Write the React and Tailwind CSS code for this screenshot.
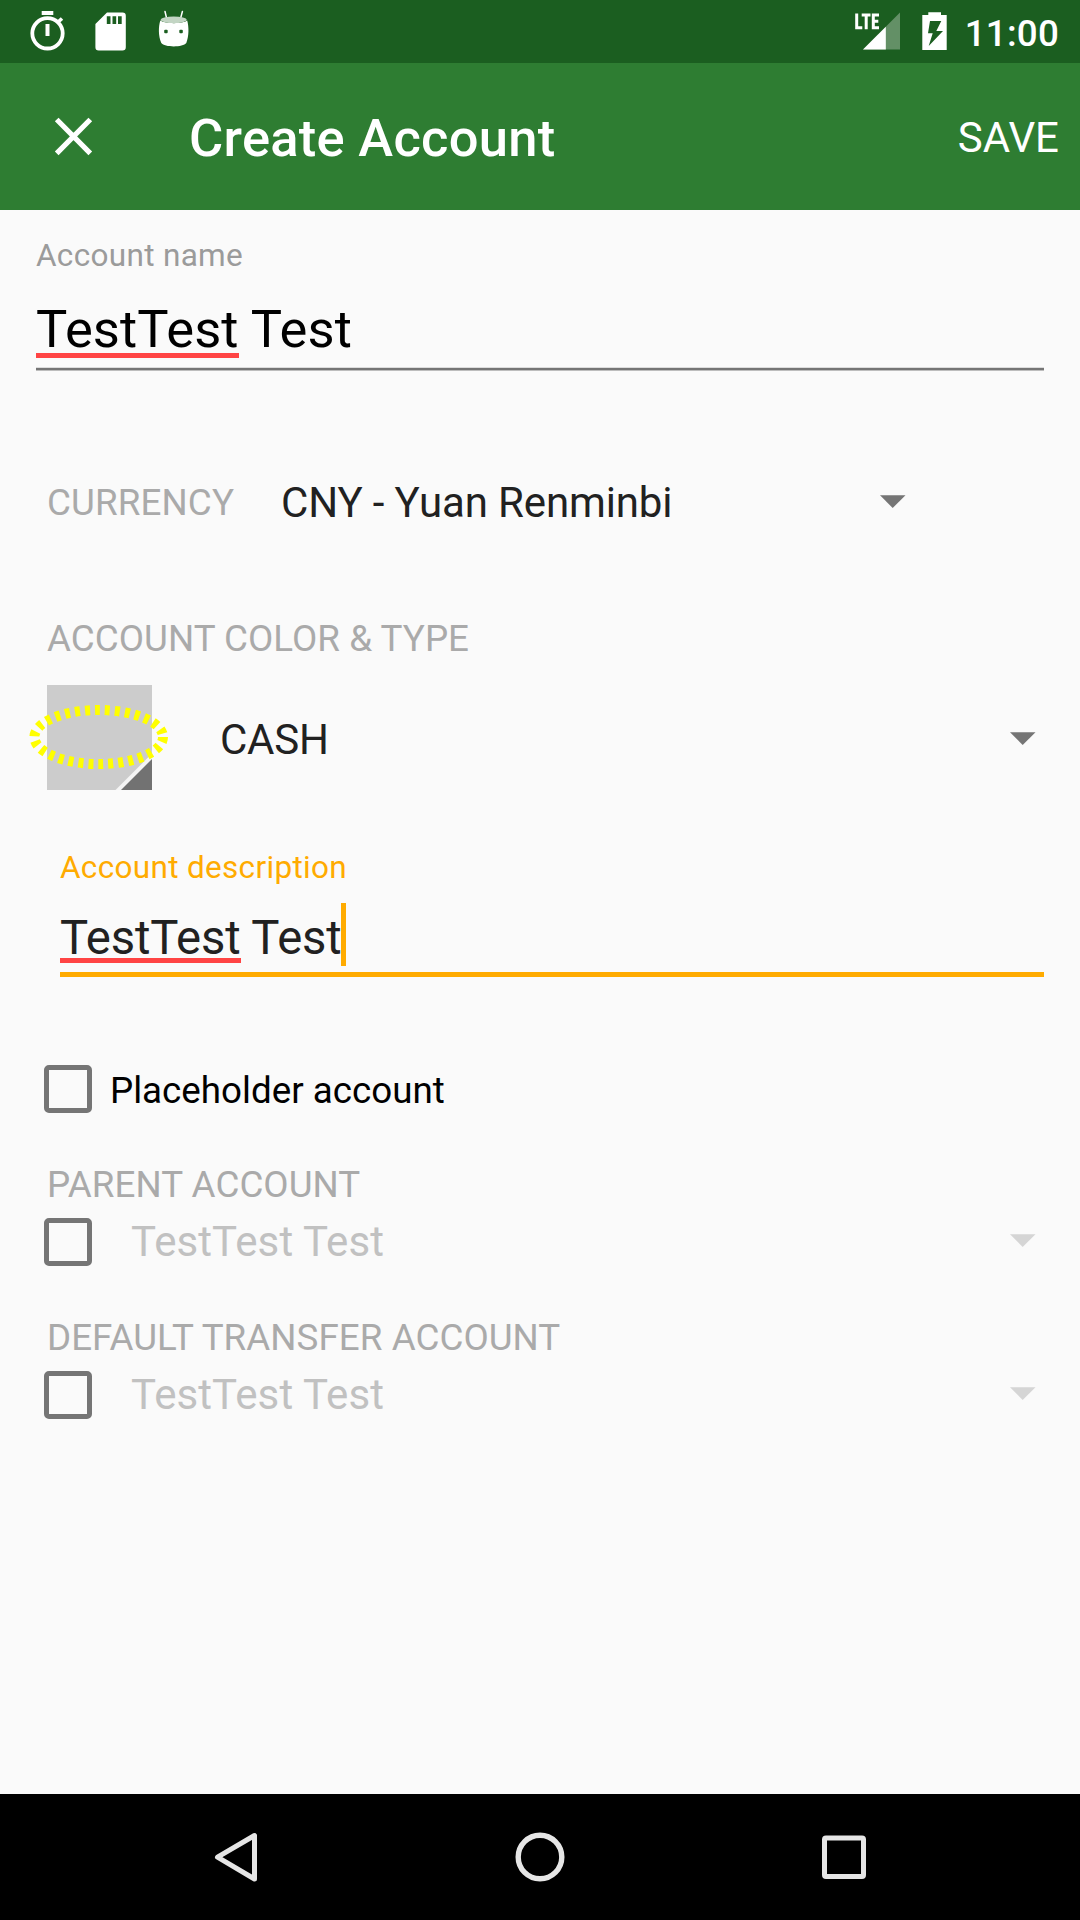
import React from "react";

function StatusBar() {
  return (
    <div className="flex h-[63px] items-start justify-between bg-[#1b5e20]">
      <div className="flex">
        <svg className="h-[63px] w-[72px]" viewBox="0 0 72 63" fill="none">
          <rect x="41.7" y="11" width="11.6" height="4" fill="#fff" />
          <circle cx="47.5" cy="33.3" r="15.2" stroke="#fff" strokeWidth="3.8" />
          <rect x="45.5" y="24" width="4" height="12" fill="#fff" />
          <path d="M57.5 22.5L62 18.5" stroke="#fff" strokeWidth="3.6" />
        </svg>
        <svg className="h-[63px] w-[72px]" viewBox="72 0 72 63">
          <path fill="#fff" fillRule="evenodd" d="M107 12.5H122.5a3.3 3.3 0 0 1 3.3 3.3V47.2a3.3 3.3 0 0 1-3.3 3.3H98.7a3.3 3.3 0 0 1-3.3-3.3V24zM106.8 16.3v7.7h3.7v-7.7zM112.5 16.3v7.7h3.7v-7.7zM118 16.3v7.7h3.7v-7.7z" />
        </svg>
        <svg className="h-[63px] w-[60px]" viewBox="144 0 60 63">
          <path d="M165 11.5L166.8 19M182.4 11.5L180.4 19" stroke="#fff" strokeWidth="1.5" strokeLinecap="round" />
          <path d="M160.3 20.5C165 24 183 24 187.2 20.5C189 27 189 36 186.3 43C183 47.5 164.5 47.5 161.3 43C158.3 36 158.3 27 160.3 20.5z" fill="#fff" />
          <ellipse cx="173.7" cy="19.8" rx="13" ry="3.3" fill="#c3d5c4" />
          <rect x="164.2" y="29.8" width="3.5" height="3.5" rx="1" fill="#1b5e20" />
          <rect x="179.3" y="29.8" width="3.5" height="3.5" rx="1" fill="#1b5e20" />
        </svg>
      </div>
      <div className="flex pr-[21px]">
        <svg className="h-[63px] w-[64px]" viewBox="846 0 64 63">
          <path d="M900 12.5V49.5H863z" fill="#639066" />
          <path d="M885.8 26.7V49.5H863z" fill="#fff" />
          <path d="M856.7 13.5V27.7H862.3M861.7 15H870.5M866.2 15V29.2M879 15H873.3V27.7H879M873.3 21.3H878.3" fill="none" stroke="#fff" strokeWidth="3" />
        </svg>
        <svg className="h-[63px] w-[55px]" viewBox="910 0 55 63">
          <path fill="#fff" fillRule="evenodd" d="M928.3 12.3H941V15H946.7V50H922.3V15H928.3zM930 21L928 33.3H932.7L928.7 46L943 31H936.3L941.3 21z" />
        </svg>
        <span className="h-[63px] text-[36.75px] leading-[67px] font-medium tracking-[0.2px]">11:00</span>
      </div>
    </div>
  );
}

function AppBar() {
  return (
    <header className="flex h-[147px] items-center bg-[#2e7d32] pr-[21px]">
      <svg className="h-[147px] w-[189px]" viewBox="0 63 189 147">
        <path d="M56.7 119.5L90.3 153.3M90.3 119.5L56.7 153.3" stroke="#fff" strokeWidth="5.2" />
      </svg>
      <h1 className="grow pt-[3px] text-[52.5px] leading-[62px] font-medium tracking-[0.27px]">Create Account</h1>
      <span className="pt-[3px] text-[42px] leading-[50px]">SAVE</span>
    </header>
  );
}

function Arrow({ className = "" }) {
  return (
    <svg className={"h-[13px] w-[26px] " + className} viewBox="0 0 26 13">
      <path d="M0 0.3H25.500L12.700 13z" fill="currentColor" />
    </svg>
  );
}

function Checkbox() {
  return <span className="h-[48px] w-[48px] shrink-0 rounded-[5px] border-[5px] border-[#757575]" />;
}

function ColorSwatch() {
  return (
    <svg className="-ml-[19px] h-[105px] w-[144px]" viewBox="28 685 144 105">
      <rect x="47" y="685" width="105" height="105" fill="#ccc" />
      <path d="M152 753.5V790H115.5z" fill="#f5f5f5" />
      <path d="M152 759V790H121z" fill="#727272" />
      <ellipse cx="98.7" cy="737" rx="64.3" ry="27" fill="none" stroke="#ff0" strokeWidth="10" strokeDasharray="5 5" />
    </svg>
  );
}

function AccountPicker({ title }) {
  return (
    <section className="h-[153px]">
      <h2 className="h-[50px] pl-[47px] text-[36.75px] leading-[50px] tracking-[0.05px] text-[#aaa]">{title}</h2>
      <div className="mt-px flex h-[62px] items-center pr-[44px] pl-[44px]">
        <Checkbox />
        <span className="grow pl-[39px] text-[42px] leading-[62px] tracking-[0.1px] text-[#c1c1c1]">TestTest Test</span>
        <Arrow className="mb-[3px] text-[#d5d5d5]" />
      </div>
    </section>
  );
}

function NavBar() {
  return (
    <nav className="flex h-[126px] items-center justify-between bg-black px-[208px]">
      <svg className="h-[60px] w-[60px]" viewBox="208 1827 60 60" fill="none">
        <path d="M254.5 1835.5V1879L217.5 1857.2z" stroke="#e6e6e6" strokeWidth="5" strokeLinejoin="round" />
      </svg>
      <svg className="h-[60px] w-[60px]" viewBox="510 1827 60 60" fill="none">
        <circle cx="540" cy="1857" r="21.8" stroke="#e6e6e6" strokeWidth="5.4" />
      </svg>
      <svg className="h-[60px] w-[60px]" viewBox="812 1827 60 60" fill="none">
        <rect x="824.5" y="1838" width="39" height="38.5" rx="1.5" stroke="#e6e6e6" strokeWidth="5" />
      </svg>
    </nav>
  );
}

export default function App() {
  return (
    <div className="flex h-[1920px] w-[1080px] flex-col overflow-hidden bg-[#fafafa] font-[Roboto,sans-serif] text-white">
      <StatusBar />
      <AppBar />
      <main className="grow">
        <div className="px-[36px] pt-[27px]">
          <label className="block h-[38px] text-[31.5px] leading-[38px] tracking-[0.32px] text-[#9b9b9b]">Account name</label>
          <div className="mt-[22px] h-[71px] text-[52.5px] leading-[64px] tracking-[0.1px] text-black">
            <span className="inline-block h-[61px] border-b-[5px] border-[#ff4444]">TestTest</span> Test
          </div>
          <div className="h-[2px] bg-[#757575] shadow-[0_1px_#bdbdbd,0_-1px_#dcdcdc]" />
        </div>
        <div className="mt-[102px] flex h-[60px] items-center pl-[47px] leading-[60px]">
          <span className="w-[234px] pt-[2px] text-[36.75px] tracking-[0.12px] text-[#aaa]">CURRENCY</span>
          <span className="w-[599px] pt-[2px] text-[42px] tracking-[-0.13px] text-[#212121]">CNY - Yuan Renminbi</span>
          <Arrow className="mb-px text-[#757575]" />
        </div>
        <h2 className="mt-[82px] h-[50px] pl-[47px] text-[36.75px] leading-[50px] tracking-[0.04px] text-[#aaa]">ACCOUNT COLOR &amp; TYPE</h2>
        <div className="mt-[21px] flex h-[105px] items-center pr-[44px] pl-[47px]">
          <ColorSwatch />
          <span className="grow pt-[4px] pl-[48px] text-[42px] leading-[101px] tracking-[-0.25px] text-[#212121]">CASH</span>
          <Arrow className="mt-[2px] text-[#757575]" />
        </div>
        <div className="pt-[59px] pr-[36px] pl-[60px]">
          <label className="block h-[38px] text-[31.5px] leading-[38px] tracking-[0.32px] text-[#ffab00]">Account description</label>
          <div className="mt-[16px] flex h-[74px] border-b-[5px] border-[#ffab00] text-[47.25px] leading-[70px] tracking-[-0.12px] text-[#212121]">
            <span className="h-[60px] border-b-[5px] border-[#ff4444]">TestTest</span>
            <span className="whitespace-pre"> Test</span>
            <span className="-ml-px h-[63px] w-[5px] bg-[#ffab00]" />
          </div>
        </div>
        <div className="mt-[88px] flex h-[48px] items-center pl-[44px]">
          <Checkbox />
          <span className="pt-[3px] pl-[18px] text-[36.75px] leading-[48px] text-black">Placeholder account</span>
        </div>
        <div className="pt-[47px]">
          <AccountPicker title="PARENT ACCOUNT" />
          <AccountPicker title="DEFAULT TRANSFER ACCOUNT" />
        </div>
      </main>
      <NavBar />
    </div>
  );
}
